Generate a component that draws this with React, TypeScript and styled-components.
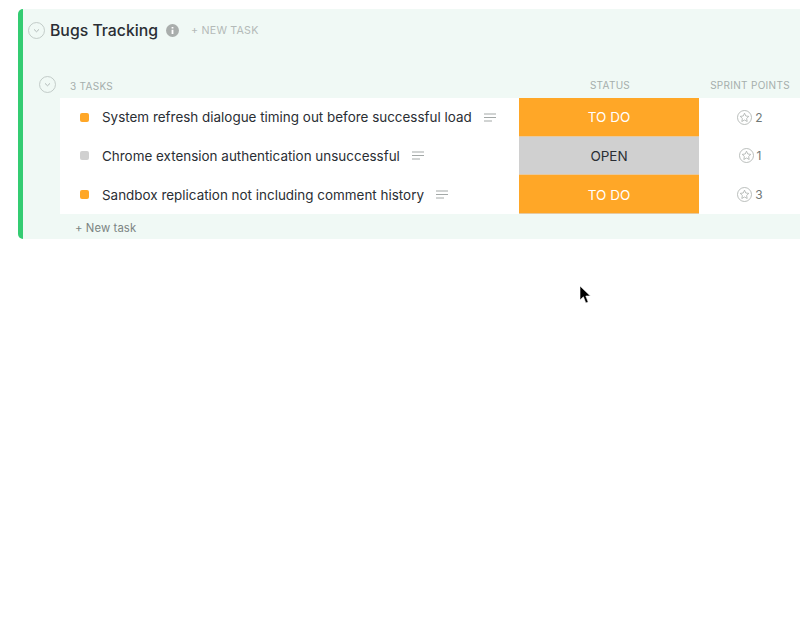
import React from 'react'
import styled, { createGlobalStyle } from 'styled-components'

const GlobalStyle = createGlobalStyle`
  html, body {
    margin: 0;
    padding: 0;
    background: #fff;
    font-family: Inter, "Liberation Sans", sans-serif;
    overflow: hidden;
  }
`

const Page = styled.div`
  position: relative;
  width: 800px;
  height: 631px;
  padding: 9px 0 0 18px;
  box-sizing: border-box;
  overflow: hidden;
`

const Panel = styled.section`
  height: 230px;
  box-sizing: border-box;
  border-left: 5px solid #34cc72;
  border-radius: 5px 0 0 5px;
  background: #f0f9f5;
  display: flex;
  flex-direction: column;
`

const Header = styled.header`
  height: 42px;
  display: flex;
  align-items: center;
  padding-left: 5px;
`

const Title = styled.h1`
  margin: 2px 0 0 5px;
  font-size: 15.8px;
  line-height: 20px;
  font-weight: 500;
  color: #2a2e34;
`

const InfoIcon = styled.svg`
  width: 13px;
  height: 13px;
  margin-left: 8px;
`

const NewTaskLink = styled.span`
  margin-left: 12px;
  font-size: 10.7px;
  letter-spacing: 0.2px;
  color: #b4bab8;
`

const TableHead = styled.div`
  margin-top: 22px;
  height: 25px;
  display: grid;
  grid-template-columns: 497px 180px 100px;
  align-items: center;
`

const HeadLeft = styled.div`
  display: flex;
  align-items: center;
  gap: 14px;
  padding-left: 16px;
  margin-top: -3px;
`

const HeadLabel = styled.span<{ $center?: boolean }>`
  display: block;
  margin-top: -1px;
  font-size: 10px;
  letter-spacing: 0.3px;
  color: #a5aeac;
  white-space: nowrap;
  text-align: ${(p) => (p.$center ? 'center' : 'left')};
`

const TasksLabel = styled(HeadLabel)`
  margin-top: 3px;
`

const Rows = styled.div`
  margin-left: 37px;
  background: #fff;
`

const Row = styled.div`
  height: 38.67px;
  display: grid;
  grid-template-columns: 459px 180px 101px;
  align-items: stretch;
`

const NameCell = styled.div`
  display: flex;
  align-items: center;
  padding-left: 20px;
`

const Dot = styled.span<{ $color: string }>`
  width: 9px;
  height: 9px;
  border-radius: 2px;
  background: ${(p) => p.$color};
  flex: none;
`

const TaskName = styled.span`
  margin-left: 13px;
  font-size: 13.45px;
  color: #2a2e34;
  white-space: nowrap;
`

const LinesIcon = styled.svg`
  width: 12px;
  height: 9px;
  margin-left: 12px;
  flex: none;
`

const StatusCell = styled.div<{ $bg: string; $fg: string }>`
  display: flex;
  align-items: center;
  justify-content: center;
  padding-top: 1px;
  background: ${(p) => p.$bg};
  color: ${(p) => p.$fg};
  font-size: 13.5px;
  border-bottom: 1px solid #e6c9a0;
  box-sizing: border-box;
`

const PointsCell = styled.div`
  display: flex;
  align-items: center;
  justify-content: center;
  gap: 3px;
  padding-left: 1px;
  font-size: 12px;
  color: #6f7775;
`

const StarIcon = styled.svg`
  width: 15px;
  height: 15px;
`

const Footer = styled.div`
  flex: 1;
  display: flex;
  align-items: center;
  padding: 3px 0 0 52px;
  font-size: 11.3px;
  letter-spacing: 0.1px;
  color: #7c8583;
`

const Cursor = styled.svg`
  position: absolute;
  left: 579px;
  top: 286px;
  width: 12px;
  height: 18px;
`

const Chevron = ({ size }: { size: number }) => (
  <svg width={size} height={size} viewBox="0 0 16 16" fill="none" style={{ flex: 'none' }}>
    <circle cx="8" cy="8" r="7.5" stroke="#b9c3bf" strokeWidth="0.8" />
    <path d="M5.9 7.2 8 9.2l2.1-2" stroke="#a5aeac" strokeWidth="0.8" strokeLinecap="round" strokeLinejoin="round" />
  </svg>
)

const Lines = () => (
  <LinesIcon viewBox="0 0 12 9" fill="none" stroke="#a3a8a7" strokeWidth="1">
    <path d="M0 1h12M0 4.5h12M0 8h8" />
  </LinesIcon>
)

const Star = () => (
  <StarIcon viewBox="0 0 15 15" fill="none" stroke="#a9aeac" strokeWidth="0.8">
    <circle cx="7.5" cy="7.5" r="7" />
    <path d="M7.5 3.2l1.3 2.8 3 .4-2.2 2.1.6 3-2.7-1.5-2.7 1.5.6-3-2.2-2.1 3-.4z" strokeLinejoin="round" />
  </StarIcon>
)

const ORANGE = '#ffa727'
const GREY = '#d0d0d0'

const tasks = [
  { name: 'System refresh dialogue timing out before successful load', status: 'TO DO', points: 2 },
  { name: 'Chrome extension authentication unsuccessful', status: 'OPEN', points: 1 },
  { name: 'Sandbox replication not including comment history', status: 'TO DO', points: 3 },
]

const App = () => {
  return (
    <Page>
      <GlobalStyle />
      <Panel>
        <Header>
          <Chevron size={17} />
          <Title>Bugs Tracking</Title>
          <InfoIcon viewBox="0 0 13 13">
            <circle cx="6.5" cy="6.5" r="6.5" fill="#a9aeac" />
            <path d="M6.5 3v1.4M6.5 5.8V10" stroke="#fff" strokeWidth="1.8" />
          </InfoIcon>
          <NewTaskLink>+ NEW TASK</NewTaskLink>
        </Header>
        <TableHead>
          <HeadLeft>
            <Chevron size={17} />
            <TasksLabel>3 TASKS</TasksLabel>
          </HeadLeft>
          <HeadLabel $center>STATUS</HeadLabel>
          <HeadLabel $center>SPRINT POINTS</HeadLabel>
        </TableHead>
        <Rows>
          {tasks.map((t) => {
            const todo = t.status === 'TO DO'
            return (
              <Row key={t.name}>
                <NameCell>
                  <Dot $color={todo ? ORANGE : GREY} />
                  <TaskName>{t.name}</TaskName>
                  <Lines />
                </NameCell>
                <StatusCell $bg={todo ? ORANGE : GREY} $fg={todo ? '#fff' : '#2a2e34'}>
                  {t.status}
                </StatusCell>
                <PointsCell>
                  <Star />
                  {t.points}
                </PointsCell>
              </Row>
            )
          })}
        </Rows>
        <Footer>+ New task</Footer>
      </Panel>
      <Cursor viewBox="0 0 12 18">
        <path d="M1 0v14l3.4-3.2L6.8 17l2.4-1-2.4-6H11.4z" fill="#000" stroke="#fff" strokeWidth="0.6" />
      </Cursor>
    </Page>
  )
}

export default App
